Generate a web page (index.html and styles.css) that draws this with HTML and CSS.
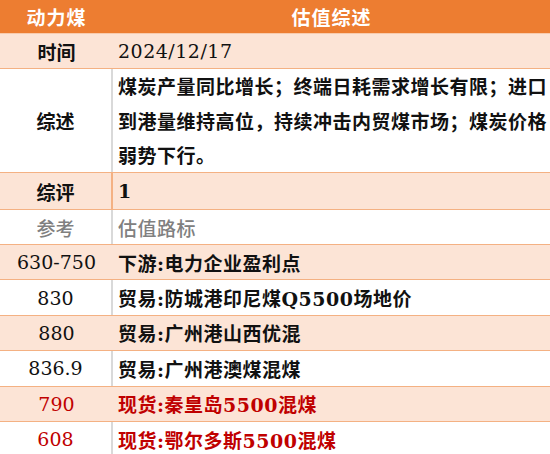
FILE: index.html
```html
<!DOCTYPE html>
<html lang="zh">
<head>
<meta charset="utf-8">
<title>动力煤 估值综述</title>
<link rel="stylesheet" href="styles.css">
</head>
<body>
<div class="sheet">
  <div class="row head">
    <div class="c1">动力煤</div>
    <div class="c2 center">估值综述</div>
  </div>
  <div class="row peach r-date">
    <div class="c1">时间</div>
    <div class="c2">2024/12/17</div>
  </div>
  <div class="row white r-summary">
    <div class="c1">综述</div>
    <div class="c2 para">煤炭产量同比增长；终端日耗需求增长有限；进口<br>到港量维持高位，持续冲击内贸煤市场；煤炭价格<br>弱势下行。</div>
  </div>
  <div class="row peach r-eval divided">
    <div class="c1">综评</div>
    <div class="c2">1</div>
  </div>
  <div class="row white r-ref gray">
    <div class="c1">参考</div>
    <div class="c2">估值路标</div>
  </div>
  <div class="row peach r-item">
    <div class="c1 num">630-750</div>
    <div class="c2">下游:电力企业盈利点</div>
  </div>
  <div class="row white r-item">
    <div class="c1 num">830</div>
    <div class="c2">贸易:防城港印尼煤Q5500场地价</div>
  </div>
  <div class="row peach r-item">
    <div class="c1 num">880</div>
    <div class="c2">贸易:广州港山西优混</div>
  </div>
  <div class="row white r-item">
    <div class="c1 num">836.9</div>
    <div class="c2">贸易:广州港澳煤混煤</div>
  </div>
  <div class="row peach r-item red">
    <div class="c1 num">790</div>
    <div class="c2">现货:秦皇岛5500混煤</div>
  </div>
  <div class="row white r-item red">
    <div class="c1 num">608</div>
    <div class="c2">现货:鄂尔多斯5500混煤</div>
  </div>
</div>
</body>
</html>
```
FILE: styles.css
```css
html, body {
  margin: 0;
  padding: 0;
  background: #ffffff;
}
body {
  width: 550px;
  height: 454px;
  overflow: hidden;
  font-family: "DejaVu Serif", "Noto Sans CJK SC", serif;
  font-size: 19px;
  color: #111111;
}
.sheet {
  display: flex;
  flex-direction: column;
  width: 550px;
}
.row {
  display: flex;
  box-sizing: border-box;
  border-bottom: 1px solid #f4b183;
}
.c1 {
  width: 113px;
  flex: none;
  display: flex;
  align-items: center;
  justify-content: center;
  font-weight: 700;
  box-sizing: border-box;
}
.c2 {
  flex: 1;
  display: flex;
  align-items: center;
  padding-left: 5px;
  font-weight: 700;
  letter-spacing: 0.5px;
}
.c2.center {
  justify-content: center;
  padding-left: 0;
}
.head {
  height: 34px;
  background: #ed7d31;
  color: #ffffff;
  border-bottom: 1px solid #f8cbad;
}
.head .c1, .head .c2 {
  letter-spacing: 1px;
}
.peach {
  background: #fce4d6;
}
.white {
  background: #ffffff;
}
.white .c1 {
  border-right: 2px solid #d9d9d9;
}
.divided .c1 {
  border-right: 2px solid #f4b183;
}
.r-date {
  height: 35px;
}
.r-date .c2 {
  font-weight: 400;
}
.r-summary {
  height: 104px;
}
.para {
  display: block;
  line-height: 34.5px;
  padding-top: 1px;
}
.r-eval {
  height: 37px;
}
.r-ref {
  height: 35px;
}
.r-item {
  height: 35.4px;
}
.num {
  font-weight: 400;
}
.gray {
  color: #808080;
}
.gray .c1, .gray .c2 {
  font-weight: 500;
}
.red {
  color: #c00000;
}
```
